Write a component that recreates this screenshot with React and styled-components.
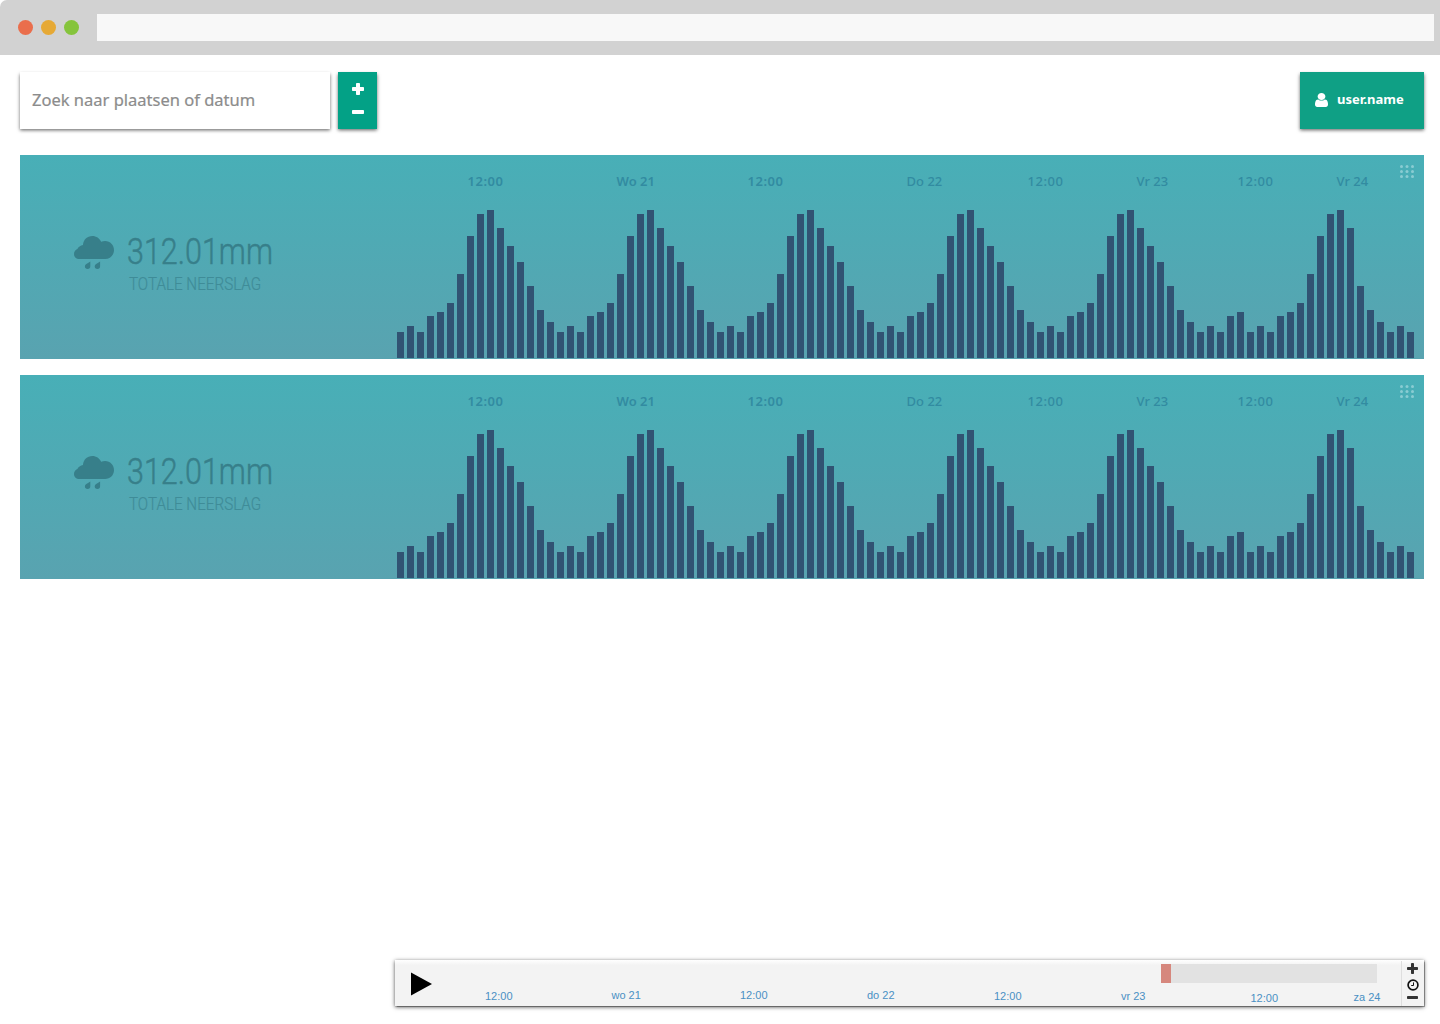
import React from 'react';
import styled, { createGlobalStyle } from 'styled-components';

const Global = createGlobalStyle`
  * { box-sizing: border-box; }
  body { margin: 0; background: #fff; font-family: "Open Sans", "Noto Sans", sans-serif; }
`;

const Page = styled.div`
  height: 1024px;
  display: flex;
  flex-direction: column;
  overflow: hidden;
`;

const Chrome = styled.header`
  height: 55px;
  flex: none;
  display: flex;
  align-items: center;
  gap: 8px;
  padding: 0 6px 0 18px;
  background: #d2d2d2;
  border-top-left-radius: 7px;
`;

const Dot = styled.span`
  width: 15px;
  height: 15px;
  border-radius: 50%;
  background: ${(p) => p.$color};
`;

const Address = styled.div`
  flex: 1;
  height: 27px;
  margin-left: 10px;
  background: #f8f8f8;
`;

const Toolbar = styled.div`
  display: flex;
  height: 57px;
  margin: 17px 16px 0 20px;
  gap: 8px;
`;

const Search = styled.input`
  width: 310px;
  height: 57px;
  border: 0;
  outline: 0;
  padding: 0 12px 3px;
  background: #fff;
  box-shadow: 0 1.5px 3.5px rgba(0, 0, 0, 0.6);
  font: 16.5px "Noto Sans", sans-serif;
  color: #8c8c8c;
  -webkit-text-stroke: 0.2px #8c8c8c;
  &::placeholder { color: #8c8c8c; opacity: 1; }
`;

const Zoom = styled.div`
  width: 39px;
  display: flex;
  flex-direction: column;
  align-items: center;
  padding-top: 11px;
  gap: 15px;
  background: #03a186;
  color: #fff;
  box-shadow: 0 1.5px 3.5px rgba(0, 0, 0, 0.6);
`;

const IconButton = styled.button`
  display: flex;
  align-items: center;
  justify-content: center;
  border: 0;
  padding: 0;
  background: none;
  color: inherit;
`;

const User = styled.div`
  width: 124px;
  margin-left: auto;
  display: flex;
  align-items: center;
  gap: 9px;
  padding: 0 0 3px 15px;
  background: #0fa085;
  box-shadow: 0 1.5px 3.5px rgba(0, 0, 0, 0.6);
  color: #fff;
  svg { margin-top: 2px; }
`;

const UserName = styled.span`
  font: 700 13px/18px "Noto Sans", sans-serif;
  white-space: nowrap;
`;

const Panels = styled.main`
  display: flex;
  flex-direction: column;
  gap: 16px;
  margin: 26px 16px 0 20px;
`;

const Panel = styled.section`
  position: relative;
  height: 204px;
  display: flex;
  background: linear-gradient(#48afb7, #59a3b0);
`;

const Summary = styled.div`
  width: 377px;
  display: flex;
  padding: 78px 0 0 54px;
  color: #377f8a;
`;

const Figures = styled.div`
  display: flex;
  flex-direction: column;
  align-items: flex-start;
  margin-left: 13px;
  white-space: nowrap;
`;

const Amount = styled.div`
  font: 300 37px/37px Roboto, sans-serif;
  -webkit-text-stroke: 0.5px currentColor;
  transform: scaleX(0.824);
  transform-origin: left;
`;

const Caption = styled.div`
  margin: 4px 0 0 2px;
  font: 300 18px/20px Roboto, sans-serif;
  color: #3f8c98;
  -webkit-text-stroke: 0.2px currentColor;
  transform: scaleX(0.845);
  transform-origin: left;
`;

const Chart = styled.div`
  flex: 1;
  display: flex;
  flex-direction: column;
  justify-content: space-between;
  padding: 17px 0 1px;
`;

const DayLabels = styled.div`
  display: grid;
  grid-template-columns: 149px 131px 159px 121px 109px 101px 99px 1fr;
  margin-left: 70.6px;
`;

const DayLabel = styled.span`
  font: ${(p) => (p.$bold ? 600 : 500)} 13px/18px "Noto Sans", sans-serif;
  letter-spacing: ${(p) => (p.$time ? '0.5px' : '0')};
  color: #328ba1;
  white-space: nowrap;
`;

const Bars = styled.div`
  display: flex;
  align-items: flex-end;
  gap: 3px;
`;

const Bar = styled.span`
  flex: none;
  width: 7px;
  background: #315373;
`;

const Grip = styled.div`
  position: absolute;
  top: 9px;
  right: 9px;
  color: #8accd2;
  svg { display: block; }
`;

const Timeline = styled.footer`
  display: flex;
  width: 1029px;
  height: 46px;
  margin: auto 16px 18px auto;
  background: linear-gradient(#fff, #f3f3f3 5px);
  box-shadow: 0 0 1px 0.5px rgba(0, 0, 0, 0.3), 0 1px 4px rgba(0, 0, 0, 0.7);
`;

const Play = styled(IconButton)`
  width: 52px;
  padding-top: 1px;
  color: #000;
`;

const Track = styled.div`
  flex: 1;
  display: flex;
  flex-direction: column;
  padding: 4px 0 0 1px;
`;

const Range = styled.div`
  width: 216px;
  height: 19px;
  margin-left: 713px;
  background: #e2e2e2;
`;

const Marker = styled.div`
  width: 10px;
  height: 19px;
  background: #d6877d;
`;

const Ticks = styled.div`
  display: grid;
  grid-template-columns: 126.5px 128.5px 127px 127px 127px 129.5px 103px 1fr;
  margin: 5px 0 0 37px;
`;

const Tick = styled.span`
  font: 11px/14px "Liberation Sans", Arial, sans-serif;
  color: #4a90c4;
  padding-top: ${(p) => p.$drop}px;
  white-space: nowrap;
`;

const Controls = styled.div`
  width: 23px;
  display: flex;
  flex-direction: column;
  align-items: center;
  gap: 5px;
  margin-top: 1px;
  height: 45px;
  padding: 2px 1px 0 0;
  border-left: 1px solid #dedede;
  color: #333;
  svg { flex: none; }
`;

const Plus = ({ size, thick }) => {
  const o = (size - thick) / 2;
  return (
    <svg width={size} height={size} fill="currentColor">
      <rect x={o} width={thick} height={size} rx="0.8" />
      <rect y={o} width={size} height={thick} rx="0.8" />
    </svg>
  );
};

const Minus = ({ size, thick }) => (
  <svg width={size} height={thick} fill="currentColor">
    <rect width={size} height={thick} rx="0.8" />
  </svg>
);

const UserIcon = () => (
  <svg width="13" height="14" viewBox="256 128 1280 1536" preserveAspectRatio="none" fill="currentColor">
    <path d="M1536 1399q0 109-62.5 187t-150.5 78h-854q-88 0-150.5-78t-62.5-187q0-85 8.5-160.5t31.5-152 58.5-131 94-89 134.5-34.5q131 128 313 128t313-128q76 0 134.5 34.5t94 89 58.5 131 31.5 152 8.5 160.5zm-256-887q0 159-112.5 271.5t-271.5 112.5-271.5-112.5-112.5-271.5 112.5-271.5 271.5-112.5 271.5 112.5 112.5 271.5z" />
  </svg>
);

const RainIcon = () => (
  <svg width="40" height="37" viewBox="0 0 40 37" fill="currentColor">
    <path d="M5 26C2 26 0 23.800 0 21c0-2.400 1.400-4.200 3.400-5 1-2 3-3.600 5.600-4C9.300 6.800 13.200 3 18.300 3c4 0 7.400 2.300 8.800 5.800 1.200-.5 2.600-.8 4-.8C36.200 8 40 12 40 17c0 5.200-3.900 9-9 9z" />
    <path d="M16.300 28.400v4.900a2.700 2.700 0 1 1-5.400 0c0-2.100 2-2.600 5.400-4.900zM26.100 28.400v4.900a2.700 2.700 0 1 1-5.400 0c0-2.100 2-2.600 5.400-4.900z" />
  </svg>
);

const GripIcon = () => (
  <svg width="15" height="15" fill="currentColor">
    {[1.5, 7, 12.5].map((x) => [2.5, 7.5, 12.5].map((y) => <circle key={`${x}-${y}`} cx={x} cy={y} r="1.5" />))}
  </svg>
);

const ClockIcon = () => (
  <svg width="12" height="12" viewBox="0 0 12 12" fill="none" stroke="#111">
    <circle cx="6" cy="6" r="4.9" strokeWidth="1.7" />
    <path d="M6.500 3.400v3.100H4.200" strokeWidth="1" />
  </svg>
);

const wave = [26, 32, 26, 42, 46, 55, 84, 122, 144, 148, 130, 112, 96, 72, 48, 36];
const rainfall = [
  ...wave, ...wave, ...wave, ...wave, ...wave,
  26, 32, 26, 42, 46, 26, 32, 26, 42, 46, 55, 84, 122, 144, 148, 130, 72, 48, 36, 26, 32, 26,
];

const days = ['12:00', 'Wo 21', '12:00', 'Do 22', '12:00', 'Vr 23', '12:00', 'Vr 24'];
const ticks = [
  ['12:00', 1], ['wo 21', 0], ['12:00', 0], ['do 22', 0],
  ['12:00', 1], ['vr 23', 1], ['12:00', 3], ['za 24', 2],
];

const RainPanel = () => (
  <Panel>
    <Summary>
      <RainIcon />
      <Figures>
        <Amount>312.01mm</Amount>
        <Caption>TOTALE NEERSLAG</Caption>
      </Figures>
    </Summary>
    <Chart>
      <DayLabels>
        {days.map((d, i) => <DayLabel key={i} $bold={i < 3} $time={d.includes(':')}>{d}</DayLabel>)}
      </DayLabels>
      <Bars>
        {rainfall.map((h, i) => <Bar key={i} style={{ height: h }} />)}
      </Bars>
    </Chart>
    <Grip><GripIcon /></Grip>
  </Panel>
);

export default function App() {
  return (
    <Page>
      <Global />
      <Chrome>
        <Dot $color="#ea6e4c" />
        <Dot $color="#e6a935" />
        <Dot $color="#85c43c" />
        <Address />
      </Chrome>
      <Toolbar>
        <Search placeholder="Zoek naar plaatsen of datum" />
        <Zoom>
          <IconButton><Plus size={12} thick={4} /></IconButton>
          <IconButton><Minus size={12} thick={4} /></IconButton>
        </Zoom>
        <User>
          <UserIcon />
          <UserName>user.name</UserName>
        </User>
      </Toolbar>
      <Panels>
        <RainPanel />
        <RainPanel />
      </Panels>
      <Timeline>
        <Play>
          <svg width="22" height="24" fill="currentColor"><path d="M1 0.500L22 12L1 23.500z" /></svg>
        </Play>
        <Track>
          <Range><Marker /></Range>
          <Ticks>
            {ticks.map(([t, drop], i) => <Tick key={i} $drop={drop}>{t}</Tick>)}
          </Ticks>
        </Track>
        <Controls>
          <Plus size={11} thick={3} />
          <ClockIcon />
          <Minus size={11} thick={3} />
        </Controls>
      </Timeline>
    </Page>
  );
}
